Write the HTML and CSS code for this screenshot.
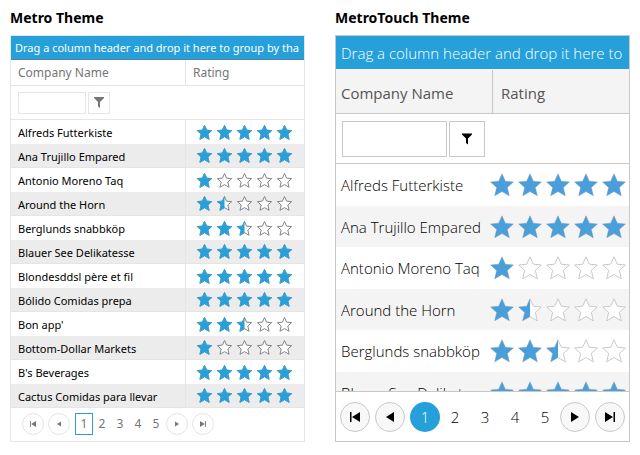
FILE: index.html
```html
<!DOCTYPE html>
<html lang="en">
<head>
<meta charset="utf-8">
<title>Grid themes</title>
<link rel="stylesheet" href="styles.css">
</head>
<body>
<svg class="defs" width="0" height="0" aria-hidden="true">
  <symbol id="star" viewBox="0 0 24 24" overflow="visible"><path d="M12 .8l3.300 7.400 8.100.8-6.100 5.400 2 8.400L12 18.600l-7.300 4.200 2-8.400L.6 9l8.100-.8z"/></symbol>
  <g id="small-stars">
    <use href="#star" x="0" width="15" height="15"/><use href="#star" x="20" width="15" height="15"/><use href="#star" x="40" width="15" height="15"/><use href="#star" x="60" width="15" height="15"/><use href="#star" x="80" width="15" height="15"/>
  </g>
  <g id="large-stars">
    <use href="#star" x="0" width="24" height="24"/><use href="#star" x="28" width="24" height="24"/><use href="#star" x="56" width="24" height="24"/><use href="#star" x="84" width="24" height="24"/><use href="#star" x="112" width="24" height="24"/>
  </g>
  <symbol id="funnel" viewBox="0 0 10 11"><path d="M0 0h10v1L6 5v6L4 9.500V5L0 1z"/></symbol>
  <symbol id="prev" viewBox="0 0 8 10"><path d="M8 0v10L0 5z"/></symbol>
  <symbol id="next" viewBox="0 0 8 10"><path d="M0 0v10l8-5z"/></symbol>
  <symbol id="first" viewBox="0 0 10 10"><path d="M0 0h1.500v10H0zM10 0v10L2 5z"/></symbol>
  <symbol id="last" viewBox="0 0 10 10"><path d="M8.500 0H10v10H8.500zM0 0v10l8-5z"/></symbol>
</svg>
<main class="themes">
  <section class="theme metro">
    <h2>Metro Theme</h2>
    <div class="grid">
      <div class="group-panel">Drag a column header and drop it here to group by tha</div>
      <div class="view">
        <table>
          <thead>
            <tr class="head"><th scope="col">Company Name</th><th scope="col">Rating</th></tr>
            <tr class="filter"><td colspan="2"><div class="filter-box"><input type="text" aria-label="Filter company name"><button type="button" aria-label="Filter"><svg><use href="#funnel"/></svg></button></div></td></tr>
          </thead>
          <tbody id="metro-rows"></tbody>
        </table>
      </div>
      <nav class="pager" aria-label="Metro pages">
        <button type="button" class="arrow wide" aria-label="First page"><svg><use href="#first"/></svg></button>
        <button type="button" class="arrow" aria-label="Previous page"><svg><use href="#prev"/></svg></button>
        <div class="pages"><a href="#1" class="current" aria-current="page">1</a><a href="#2">2</a><a href="#3">3</a><a href="#4">4</a><a href="#5">5</a></div>
        <button type="button" class="arrow" aria-label="Next page"><svg><use href="#next"/></svg></button>
        <button type="button" class="arrow wide" aria-label="Last page"><svg><use href="#last"/></svg></button>
      </nav>
    </div>
  </section>
  <section class="theme touch">
    <h2>MetroTouch Theme</h2>
    <div class="grid">
      <div class="group-panel">Drag a column header and drop it here to</div>
      <div class="view">
        <table>
          <thead>
            <tr class="head"><th scope="col">Company Name</th><th scope="col">Rating</th></tr>
            <tr class="filter"><td colspan="2"><div class="filter-box"><input type="text" aria-label="Filter company name"><button type="button" aria-label="Filter"><svg><use href="#funnel"/></svg></button></div></td></tr>
          </thead>
          <tbody id="touch-rows"></tbody>
        </table>
      </div>
      <nav class="pager" aria-label="MetroTouch pages">
        <button type="button" class="arrow wide" aria-label="First page"><svg><use href="#first"/></svg></button>
        <button type="button" class="arrow" aria-label="Previous page"><svg><use href="#prev"/></svg></button>
        <div class="pages"><a href="#1" class="current" aria-current="page">1</a><a href="#2">2</a><a href="#3">3</a><a href="#4">4</a><a href="#5">5</a></div>
        <button type="button" class="arrow" aria-label="Next page"><svg><use href="#next"/></svg></button>
        <button type="button" class="arrow wide" aria-label="Last page"><svg><use href="#last"/></svg></button>
      </nav>
    </div>
  </section>
</main>
<script src="grid.js"></script>
</body>
</html>
```
FILE: styles.css
```css
* { box-sizing: border-box; }
body { margin: 0; background: #fff; color: #000; font-family: "Open Sans", "Noto Sans", sans-serif; }
.defs { position: absolute; }
.themes { display: grid; grid-template-columns: 1fr 1fr; gap: 30px; padding: 8px 10px 0; }
.theme { min-width: 0; }
h2 { margin: 0 0 7px; font-size: 14px; line-height: 20px; font-weight: 700; font-family: "Noto Sans", "Open Sans", sans-serif; }
.grid { border: 1px solid var(--line); }
.group-panel { background: #25a0da; color: #fff; white-space: nowrap; overflow: hidden; }
table { width: 100%; border-collapse: separate; border-spacing: 0; table-layout: fixed; }
th, td { padding: 0; text-align: left; font-weight: inherit; white-space: nowrap; }
.filter-box { display: flex; }
input, button { border: 1px solid var(--line); background: #fff; padding: 0; margin: 0; font: inherit; }
input { min-width: 0; }
button { display: flex; align-items: center; justify-content: center; }
button svg { fill: var(--icon); }
.view { overflow: hidden; }
.stars { display: block; overflow: visible; }
.pager { display: flex; align-items: center; }
.pages { display: flex; }
.pages a { color: inherit; text-decoration: none; text-align: center; }
.arrow { border-radius: 50%; flex: none; }

.metro { --line: #e5e5e5; --icon: #767676; }
.metro .grid { font-family: "Noto Sans", "Open Sans", sans-serif; font-size: 11px; line-height: 16px; }
.metro .group-panel { height: 24px; padding: 4px 4px 3px; border-bottom: 1px solid #5b7f94; }
.metro th { height: 26px; padding: 0 7px; color: #767676; font-size: 12px; border-bottom: 1px solid var(--line); }
.metro th:first-child, .metro tbody td:first-child { width: 175px; border-right: 1px solid var(--line); }
.metro .filter td { height: 34px; padding: 0 7px; border-bottom: 1px solid var(--line); }
.metro .filter-box { gap: 2px; }
.metro input { width: 68px; height: 22px; }
.metro .filter button { width: 22px; height: 22px; }
.metro .filter svg { width: 10px; height: 11px; }
.metro tbody td { height: 24px; padding: 2px 7px 0; }
.metro tbody td:last-child { padding: 0 11px; }
.metro tbody tr:nth-child(even) td { background: #ececec; border-bottom: 1px solid var(--line); }
.metro .stars { width: 95px; height: 15px; }
.metro .empty { fill: #fff; stroke: #858585; stroke-width: 1.6px; }
.metro .full { fill: #25a0da; stroke: #35a2d7; stroke-width: 1.6px; }
.metro .pager { padding: 5px 11px 6px; color: #767676; font-size: 12px; }
.metro .arrow { width: 22px; height: 22px; margin-right: 4px; }
.metro .arrow svg { width: 4px; height: 6px; }
.metro .arrow.wide svg { width: 6px; height: 6px; }
.metro .pages { padding: 0 1px; }
.metro .pages a { width: 18px; height: 22px; line-height: 22px; }
.metro .pages .current { border: 1px solid #25a0da; line-height: 20px; }

.touch { --line: #c8c8c8; --icon: #000; }
.touch .grid { font-size: 15px; line-height: 22px; font-weight: 300; }
.touch .group-panel { height: 34px; padding: 6px 5px; border-bottom: 1px solid #fff; }
.touch .view { height: 321px; }
.touch th { height: 44px; padding: 2px 5px 0; background: #f4f4f4; color: #555; font-weight: 400; border-bottom: 1px solid var(--line); }
.touch th:first-child { width: 157px; border-right: 1px solid var(--line); }
.touch th:last-child { padding-left: 8px; }
.touch .filter td { height: 50px; padding: 0 6px; border-bottom: 1px solid var(--line); }
.touch .filter-box { gap: 2px; }
.touch input { width: 105px; height: 36px; }
.touch .filter button { width: 36px; height: 36px; }
.touch .filter svg { width: 10px; height: 12px; }
.touch tbody td { height: 42px; padding: 0 0 0 5px; }
.touch tbody td:last-child { padding: 0; }
.touch tbody tr:nth-child(even) td { height: 41px; background: #f4f4f4; }
.touch .stars { width: 136px; height: 24px; margin-left: -3px; }
.touch .empty { fill: #fff; stroke: #cacaca; stroke-width: 1px; }
.touch .full { fill: #4a9eda; stroke: #4a9eda; stroke-width: 0; }
.touch .pager { padding: 10px 4px 9px; border-top: 1px solid var(--line); }
.touch .arrow { width: 30px; height: 30px; margin-right: 5px; background: #f8f8f8; }
.touch .arrow:last-child { margin-right: 0; }
.touch .arrow svg { width: 8px; height: 10px; }
.touch .arrow.wide svg { width: 10px; height: 10px; }
.touch .pages a { width: 30px; height: 30px; line-height: 30px; }
.touch .pages .current { background: #25a0da; color: #fff; border-radius: 50%; }
```
FILE: grid.js
```js
const companies = [
  ["Alfreds Futterkiste", 5], ["Ana Trujillo Empared", 5], ["Antonio Moreno Taq", 1],
  ["Around the Horn", 1.5], ["Berglunds snabbköp", 2.5], ["Blauer See Delikatesse", 5],
  ["Blondesddsl père et fil", 5], ["Bólido Comidas prepa", 5], ["Bon app'", 2.5],
  ["Bottom-Dollar Markets", 1], ["B's Beverages", 5], ["Cactus Comidas para llevar", 5]
];

// The filled stars are clipped to the rating's width; a small margin keeps their outlines whole.
function fillRows(id, rows, kind, star, pitch) {
  document.getElementById(id).innerHTML = rows.map(([name, rating]) => {
    const whole = Math.floor(rating);
    const partial = (rating - whole) * star;
    const sliver = kind === "large" && rating === 1 ? 2 : 0;
    const width = whole * pitch + (partial ? partial + 1 : sliver);
    return `<tr><td>${name}</td><td><svg class="stars" role="img" aria-label="${rating} of 5">` +
      `<use class="empty" href="#${kind}-stars"/>` +
      `<svg x="-1" y="-1" width="${width}" height="${star + 2}" viewBox="-1 -1 ${width} ${star + 2}">` +
      `<use class="full" href="#${kind}-stars"/></svg></svg></td></tr>`;
  }).join("");
}

fillRows("metro-rows", companies, "small", 15, 20);
fillRows("touch-rows", companies.slice(0, 6), "large", 24, 28);
```
